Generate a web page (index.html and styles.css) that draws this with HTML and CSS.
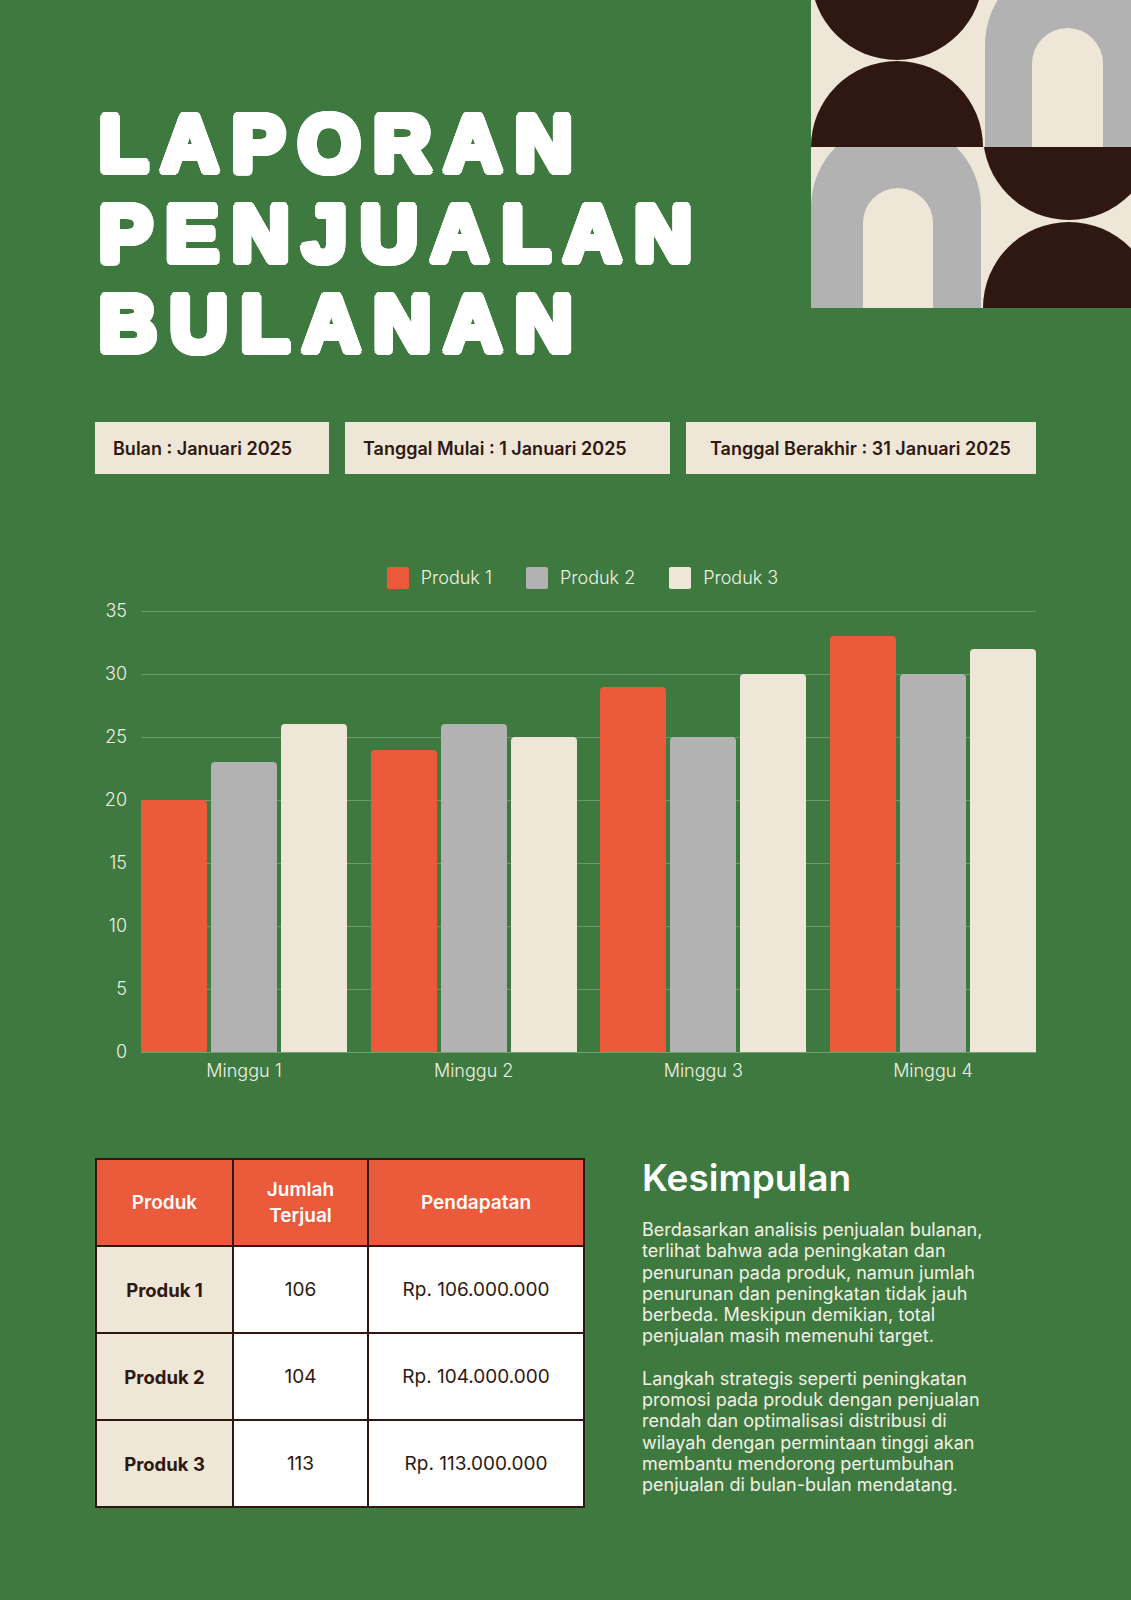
FILE: index.html
```html
<!DOCTYPE html>
<html lang="id">
<head>
<meta charset="utf-8">
<title>Laporan Penjualan Bulanan</title>
<link rel="stylesheet" href="styles.css">
</head>
<body>
<div class="page">
  <header class="header">
    <h1 class="title">LAPORAN<br>PENJUALAN<br>BULANAN</h1>
    <svg class="pattern" viewBox="0 0 320 308" width="320" height="308" aria-hidden="true">
      <defs>
        <clipPath id="tl"><rect x="0" y="0" width="172" height="147"/></clipPath>
        <clipPath id="tr"><rect x="172" y="0" width="148" height="147"/></clipPath>
        <clipPath id="bl"><rect x="0" y="147" width="172" height="161"/></clipPath>
        <clipPath id="br"><rect x="172" y="147" width="148" height="161"/></clipPath>
      </defs>
      <rect width="320" height="308" fill="#EEE6D6"/>
      <g clip-path="url(#tl)" fill="#2E1811">
        <circle cx="86" cy="-26" r="86"/>
        <circle cx="86" cy="147" r="86"/>
      </g>
      <g clip-path="url(#tr)">
        <path fill="#B3B2B3" d="M174 147 V45 A86 86 0 0 1 346 45 V147 Z"/>
        <path fill="#EEE6D6" d="M221 147 V63.5 A35.5 35.5 0 0 1 292 63.5 V147 Z"/>
      </g>
      <g clip-path="url(#bl)">
        <path fill="#B3B2B3" d="M0 308 V207 A85 85 0 0 1 170 207 V308 Z"/>
        <path fill="#EEE6D6" d="M52 308 V223 A35 35 0 0 1 122 223 V308 Z"/>
      </g>
      <g clip-path="url(#br)" fill="#2E1811">
        <circle cx="258" cy="134" r="86"/>
        <circle cx="258" cy="308" r="86"/>
      </g>
    </svg>
  </header>

  <section class="info">
    <div class="info-box">Bulan : Januari 2025</div>
    <div class="info-box">Tanggal Mulai : 1 Januari 2025</div>
    <div class="info-box info-box--wide">Tanggal Berakhir : 31 Januari 2025</div>
  </section>

  <section class="chart">
    <div class="legend">
      <span class="legend-item"><i class="swatch swatch--red"></i>Produk 1</span>
      <span class="legend-item"><i class="swatch swatch--gray"></i>Produk 2</span>
      <span class="legend-item"><i class="swatch swatch--cream"></i>Produk 3</span>
    </div>
    <div class="y-axis">
      <span>35</span><span>30</span><span>25</span><span>20</span><span>15</span><span>10</span><span>5</span><span>0</span>
    </div>
    <div class="plot">
      <div class="group">
        <div class="bar bar--red" style="height:252px"></div>
        <div class="bar bar--gray" style="height:289.8px"></div>
        <div class="bar bar--cream" style="height:327.6px"></div>
      </div>
      <div class="group">
        <div class="bar bar--red" style="height:302.4px"></div>
        <div class="bar bar--gray" style="height:327.6px"></div>
        <div class="bar bar--cream" style="height:315px"></div>
      </div>
      <div class="group">
        <div class="bar bar--red" style="height:365.4px"></div>
        <div class="bar bar--gray" style="height:315px"></div>
        <div class="bar bar--cream" style="height:378px"></div>
      </div>
      <div class="group">
        <div class="bar bar--red" style="height:415.8px"></div>
        <div class="bar bar--gray" style="height:378px"></div>
        <div class="bar bar--cream" style="height:403.2px"></div>
      </div>
    </div>
    <div class="x-axis">
      <span>Minggu 1</span><span>Minggu 2</span><span>Minggu 3</span><span>Minggu 4</span>
    </div>
  </section>

  <section class="bottom">
    <table class="sales">
      <colgroup>
        <col class="c1"><col class="c2"><col class="c3">
      </colgroup>
      <thead>
        <tr><th>Produk</th><th>Jumlah<br>Terjual</th><th>Pendapatan</th></tr>
      </thead>
      <tbody>
        <tr><td class="name">Produk 1</td><td>106</td><td>Rp. 106.000.000</td></tr>
        <tr><td class="name">Produk 2</td><td>104</td><td>Rp. 104.000.000</td></tr>
        <tr><td class="name">Produk 3</td><td>113</td><td>Rp. 113.000.000</td></tr>
      </tbody>
    </table>
    <div class="summary">
      <h2 class="summary-title">Kesimpulan</h2>
      <p>Berdasarkan analisis penjualan bulanan, terlihat bahwa ada peningkatan dan penurunan pada produk, namun jumlah penurunan dan peningkatan tidak jauh berbeda. Meskipun demikian, total penjualan masih memenuhi target.</p>
      <p>Langkah strategis seperti peningkatan promosi pada produk dengan penjualan rendah dan optimalisasi distribusi di wilayah dengan permintaan tinggi akan membantu mendorong pertumbuhan penjualan di bulan-bulan mendatang.</p>
    </div>
  </section>
</div>
</body>
</html>
```

FILE: styles.css
```css
* { box-sizing: border-box; }

body {
  margin: 0;
  background: #3E7A3F;
  font-family: Inter, "Noto Sans", sans-serif;
  color: #2E1811;
}

.page {
  width: 1131px;
  min-height: 1600px;
  background: #3E7A3F;
  overflow: hidden;
}

/* Header */
.header {
  display: flex;
  justify-content: space-between;
  align-items: flex-start;
  padding-left: 95px;
}

.title {
  margin: 99px 0 0 4px;
  font-family: "Liberation Sans", Arial, sans-serif;
  font-weight: bold;
  font-size: 80px;
  line-height: 90px;
  letter-spacing: 13px;
  color: #fff;
  text-shadow:
    4px 0 0 #fff, -4px 0 0 #fff, 0 4px 0 #fff, 0 -4px 0 #fff,
    2.8px 2.8px 0 #fff, -2.8px 2.8px 0 #fff, 2.8px -2.8px 0 #fff, -2.8px -2.8px 0 #fff,
    3.7px 1.5px 0 #fff, -3.7px 1.5px 0 #fff, 3.7px -1.5px 0 #fff, -3.7px -1.5px 0 #fff,
    1.5px 3.7px 0 #fff, -1.5px 3.7px 0 #fff, 1.5px -3.7px 0 #fff, -1.5px -3.7px 0 #fff;
}

.pattern {
  display: block;
  flex-shrink: 0;
}

/* Info boxes */
.info {
  display: grid;
  grid-template-columns: 234px 325px 1fr;
  gap: 16px;
  width: 941px;
  margin: 53px 0 0 95px;
}

.info-box {
  height: 52px;
  display: flex;
  align-items: center;
  padding: 0 18px;
  background: #EEE6D6;
  font-size: 18px;
  font-weight: 600;
  color: #2E1811;
  white-space: nowrap;
}

.info-box--wide {
  padding-left: 24px;
}

/* Chart */
.chart {
  display: grid;
  grid-template-columns: 46px 895px;
  grid-template-rows: 22px 442px auto;
  width: 941px;
  margin: 93px 0 0 95px;
  color: #F4F0E6;
  font-size: 18px;
  font-weight: 300;
}

.legend {
  grid-column: 2;
  grid-row: 1;
  display: flex;
  justify-content: center;
  gap: 34px;
  margin-left: -12px;
  line-height: 22px;
}

.legend-item {
  display: flex;
  align-items: center;
}

.swatch {
  display: block;
  width: 22px;
  height: 22px;
  border-radius: 2px;
  margin-right: 12px;
}

.swatch--red, .bar--red { background: #EB5A3A; }
.swatch--gray, .bar--gray { background: #B3B2B3; }
.swatch--cream, .bar--cream { background: #EEE6D6; }

.y-axis {
  grid-column: 1;
  grid-row: 2;
  margin-top: 22px;
  height: 442px;
  display: flex;
  flex-direction: column;
  justify-content: space-between;
  align-items: flex-end;
  padding: 0 14px 1px 0;
}

.y-axis span {
  display: block;
  height: 0;
  line-height: 0;
}

.plot {
  grid-column: 2;
  grid-row: 2;
  margin-top: 22px;
  height: 442px;
  display: flex;
  justify-content: space-between;
  align-items: flex-end;
  border-bottom: 1px solid #76A176;
  background: repeating-linear-gradient(to bottom, #6B9A6B 0 1px, transparent 1px 63px);
}

.group {
  display: flex;
  align-items: flex-end;
  gap: 4px;
}

.bar {
  width: 66px;
  border-radius: 4px 4px 0 0;
}

.x-axis {
  grid-column: 2;
  grid-row: 3;
  margin-top: 29px;
  display: flex;
  justify-content: space-between;
  line-height: 22px;
}

.x-axis span {
  width: 206px;
  text-align: center;
}

/* Bottom section */
.bottom {
  display: flex;
  align-items: flex-start;
  gap: 57px;
  margin: 76px 0 0 95px;
}

.sales {
  border-collapse: collapse;
  width: 488px;
  table-layout: fixed;
  border: 2px solid #2E1811;
  flex-shrink: 0;
}

.sales .c1 { width: 137px; }
.sales .c2 { width: 135px; }
.sales .c3 { width: 216px; }

.sales th,
.sales td {
  border: 2px solid #2E1811;
  height: 87px;
  text-align: center;
  padding: 0 8px;
  font-size: 19px;
}

.sales th {
  background: #EB5A3A;
  color: #fff;
  font-weight: 600;
  line-height: 26px;
}

.sales td {
  background: #fff;
  color: #2E1811;
  font-weight: 400;
}

.sales td.name {
  background: #EEE6D6;
  font-weight: 700;
  font-size: 18.5px;
}

.summary {
  width: 358px;
  color: #F4F0E6;
}

.summary-title {
  margin: 0;
  font-size: 37px;
  line-height: 40px;
  font-weight: 600;
  color: #fff;
}

.summary p {
  margin: 21px 0 0;
  font-size: 18px;
  line-height: 21.3px;
  font-weight: 400;
}
```
